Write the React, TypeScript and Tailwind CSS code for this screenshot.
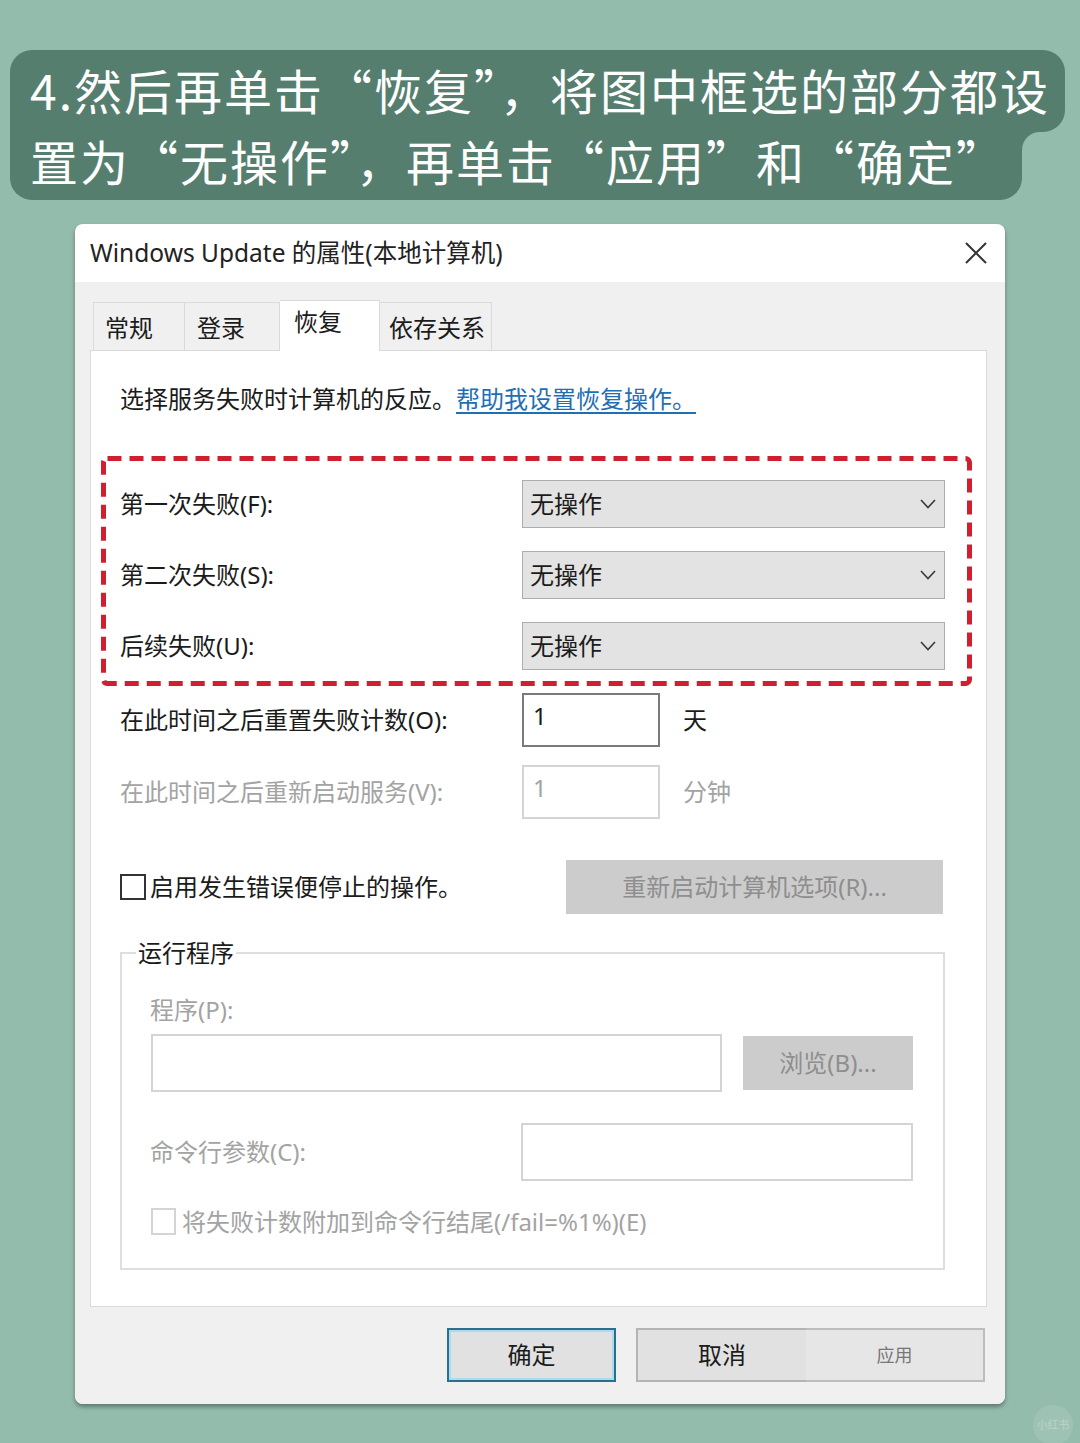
import React from 'react';

const font = "font-['Noto_Sans','Noto_Sans_CJK_SC',sans-serif]";

const Chevron = () => (
    <svg width="16" height="10" viewBox="0 0 16 10" fill="none">
        <polyline points="1,1 8,8.5 15,1" stroke="#3a3a3a" strokeWidth="1.6" />
    </svg>
);

const Dropdown = ({ label }: { label: string }) => (
    <div className="flex items-center h-[48px]">
        <div className="w-[402px] text-[24px] leading-[30px] text-[#1b1b1b]">{label}</div>
        <div className="w-[423px] h-[48px] flex items-center justify-between pl-[7px] pr-[8px] bg-[#e3e3e3] border border-[#adadad]">
            <span className="text-[24px] leading-[30px] text-[#1b1b1b]">无操作</span>
            <Chevron />
        </div>
    </div>
);

const App: React.FC = () => {
    return (
        <div className={`w-[1080px] h-[1443px] bg-[#93bcad] relative overflow-hidden pt-[50px] ${font}`}>
            {/* banner */}
            <div className="ml-[10px] font-['Noto_Sans_CJK_SC',sans-serif] text-white">
                <div className="w-[1055px] h-[82px] bg-[#567e6f] rounded-t-[22px] rounded-br-[22px] pl-[20px] flex items-center">
                    <span className="text-[48px] leading-[60px] tracking-[2px] whitespace-nowrap -mt-[4px]">4.然后再单击“恢复”，将图中框选的部分都设</span>
                </div>
                <div className="relative w-[1012px] h-[68px] bg-[#567e6f] rounded-b-[22px] pl-[20px] flex items-start">
                    <span className="text-[48px] leading-[60px] tracking-[2px] whitespace-nowrap -mt-[2px]">置为“无操作”，再单击“应用”和“确定”</span>
                    <div className="absolute left-[1012px] top-0 w-[18px] h-[18px] bg-[#567e6f]">
                        <div className="w-full h-full bg-[#93bcad] rounded-tl-[18px]" />
                    </div>
                </div>
            </div>

            {/* dialog */}
            <div className="mt-[24px] ml-[75px] w-[930px] h-[1180px] bg-white rounded-[8px] shadow-[0_3px_4px_rgba(0,0,0,0.35)] flex flex-col overflow-hidden">
                <div className="h-[58px] flex items-center justify-between pl-[15px] pr-[18px] shrink-0">
                    <span className="text-[24.5px] leading-[30px] text-[#222]">Windows Update 的属性(本地计算机)</span>
                    <svg width="22" height="22" viewBox="0 0 22 22">
                        <path d="M1 1 L21 21 M21 1 L1 21" stroke="#333" strokeWidth="2" />
                    </svg>
                </div>

                <div className="flex-1 bg-[#f0f0f0] pl-[15px] pr-[18px] flex flex-col">
                    {/* tabs */}
                    <div className="flex items-end h-[68px] ml-[3px] text-[24px] leading-[30px] text-[#1b1b1b]">
                        <div className="w-[92px] h-[48px] border border-b-0 border-[#dadada] pl-[11px] pt-[10px]">常规</div>
                        <div className="w-[95px] h-[48px] border border-b-0 border-l-0 border-[#dadada] pl-[12px] pt-[10px]">登录</div>
                        <div className="w-[100px] h-[51px] bg-white border border-b-0 border-l-0 border-[#dadada] pl-[14px] pt-[6px] -mb-[1px] relative z-10">恢复</div>
                        <div className="w-[112px] h-[48px] border border-b-0 border-l-0 border-[#dadada] pl-[9px] pt-[10px]">依存关系</div>
                    </div>

                    {/* panel */}
                    <div className="w-[897px] h-[957px] bg-white border border-[#dadada] flex flex-col text-[24px] leading-[30px] text-[#1b1b1b]">
                        <div className="mt-[33px] pl-[29px] h-[30px] flex">
                            <span>选择服务失败时计算机的反应。</span>
                            <span className="text-[#1f6fb5] underline underline-offset-[4px]">帮助我设置恢复操作。</span>
                        </div>

                        <div className="relative mt-[42px] ml-[10px] w-[871px] h-[230px] pt-[24px] pl-[19px] flex flex-col gap-[23px]">
                            <Dropdown label="第一次失败(F):" />
                            <Dropdown label="第二次失败(S):" />
                            <Dropdown label="后续失败(U):" />
                            <svg className="absolute inset-0 pointer-events-none" width="871" height="230">
                                <rect x="2.5" y="2.5" width="866" height="225" rx="4" fill="none" stroke="#d0202f" strokeWidth="5" strokeDasharray="14 8" />
                            </svg>
                        </div>

                        <div className="mt-[7px] pl-[29px] h-[54px] flex items-center">
                            <div className="w-[402px]">在此时间之后重置失败计数(O):</div>
                            <div className="w-[138px] h-[54px] border-2 border-[#7a7a7a] pl-[9px] pt-[8px] leading-[26px]">1</div>
                            <div className="ml-[23px]">天</div>
                        </div>

                        <div className="mt-[18px] pl-[29px] h-[54px] flex items-center text-[#a3a3a3]">
                            <div className="w-[402px]">在此时间之后重新启动服务(V):</div>
                            <div className="w-[138px] h-[54px] border-2 border-[#d4d4d4] pl-[9px] pt-[8px] leading-[26px]">1</div>
                            <div className="ml-[23px]">分钟</div>
                        </div>

                        <div className="mt-[41px] pl-[29px] h-[54px] flex items-center">
                            <div className="w-[446px] flex items-center">
                                <div className="w-[26px] h-[26px] border-2 border-[#333] mr-[4px]" />
                                <span>启用发生错误便停止的操作。</span>
                            </div>
                            <div className="w-[377px] h-[54px] bg-[#cccccc] flex items-center justify-center text-[#8e8e8e]">重新启动计算机选项(R)...</div>
                        </div>

                        <fieldset className="mt-[24px] ml-[29px] w-[825px] border-2 border-[#dedede] pb-[33px]">
                            <legend className="ml-[14px] px-[2px] text-[#1b1b1b]">运行程序</legend>
                            <div className="mt-[27px] pl-[28px] text-[#a3a3a3]">程序(P):</div>
                            <div className="mt-[9px] ml-[29px] flex items-center">
                                <div className="w-[571px] h-[58px] border-2 border-[#d4d4d4]" />
                                <div className="ml-[21px] w-[170px] h-[54px] bg-[#cccccc] flex items-center justify-center text-[#8e8e8e]">浏览(B)...</div>
                            </div>
                            <div className="mt-[31px] pl-[28px] flex items-center h-[58px]">
                                <div className="w-[371px] text-[#a3a3a3]">命令行参数(C):</div>
                                <div className="w-[392px] h-[58px] border-2 border-[#d4d4d4]" />
                            </div>
                            <div className="mt-[27px] ml-[29px] flex items-center h-[27px]">
                                <div className="w-[25px] h-[27px] border-2 border-[#d4d4d4]" />
                                <span className="ml-[6px] text-[#a3a3a3]">将失败计数附加到命令行结尾(/fail=%1%)(E)</span>
                            </div>
                        </fieldset>
                    </div>

                    {/* buttons */}
                    <div className="mt-[21px] flex justify-end mr-[2px] text-[24px] leading-[30px] text-[#1b1b1b]">
                        <div className="w-[169px] h-[54px] bg-[#e1e1e1] border-2 border-[#2b6f8c] shadow-[inset_0_0_0_2px_#a9dcef] flex items-center justify-center">确定</div>
                        <div className="ml-[20px] w-[170px] h-[54px] bg-[#e1e1e1] border-2 border-r-0 border-[#b4b4b4] flex items-center justify-center">取消</div>
                        <div className="w-[179px] h-[54px] bg-[#e6e6e6] border-2 border-l-0 border-[#bdbdbd] flex items-center justify-center text-[18px] text-[#777]">应用</div>
                    </div>
                </div>
            </div>

            {/* watermark */}
            <div className="absolute left-[1033px] top-[1405px] w-[40px] h-[40px] rounded-full bg-white/10 flex items-center justify-center text-[11px] text-white/30">小红书</div>
        </div>
    );
};

export default App;
